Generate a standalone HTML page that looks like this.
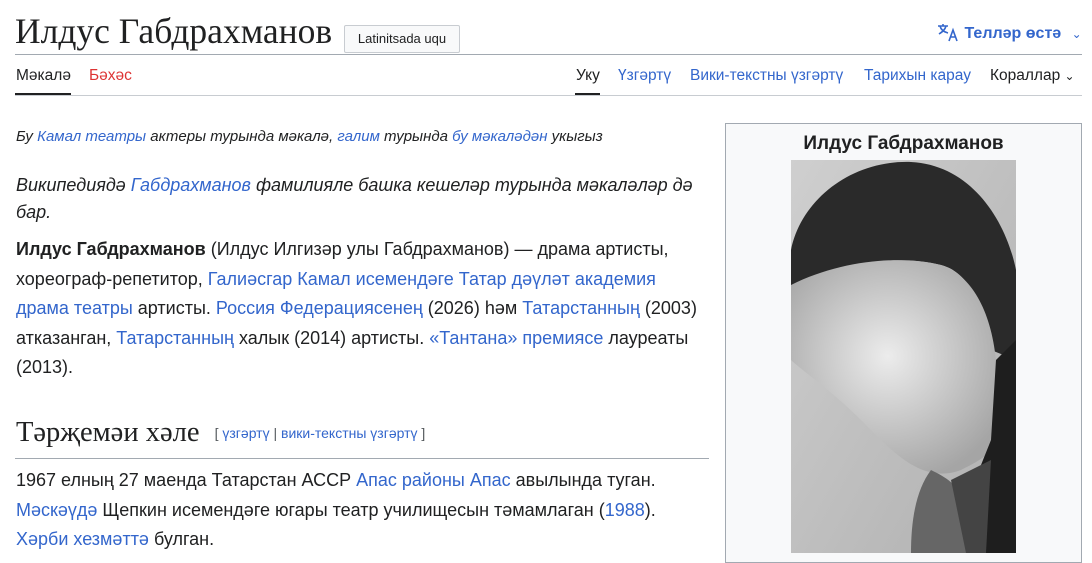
<!DOCTYPE html>
<html><head><meta charset="utf-8"><style>
*{margin:0;padding:0;box-sizing:border-box}
body{width:1092px;height:553px;overflow:hidden;background:#fff;font-family:"Liberation Sans",sans-serif;color:#202122;position:relative}
a{color:#3366cc;text-decoration:none}
.abs{position:absolute;white-space:nowrap}
h1{position:absolute;left:15px;top:10px;font-family:"Liberation Serif",serif;font-weight:normal;font-size:35.5px;line-height:42px;color:#202122}
.btn{position:absolute;left:344px;top:25px;width:116px;height:28px;border:1px solid #c8ccd1;background:#f8f9fa;font-size:13px;line-height:26px;text-align:center;border-radius:2px}
.rule{position:absolute;height:1px;background:#a2a9b1}
.tab{position:absolute;top:66px;font-size:15.5px;line-height:20px}
.p{position:absolute;left:16px;width:690px;font-size:18px;line-height:29.5px}
</style></head><body>
<h1>Илдус Габдрахманов</h1>
<div class="btn">Latinitsada uqu</div>
<div class="abs" style="left:936px;top:22px;font-size:16px;font-weight:bold;color:#3366cc">
<svg width="24" height="20" viewBox="0 0 22 20" style="vertical-align:-4px"><g fill="none" stroke="#3366cc" stroke-width="1.6"><path d="M1 4h10M6 2v2M3 4c1 4 4 6 8 7M9 4c-1 4-4 6-7 8"/><path d="M12 19l4-11 4 11M13.5 15h5"/></g></svg>
 Телләр өстә <span style="font-weight:normal;font-size:12px;margin-left:6px">⌄</span></div>
<div class="rule" style="left:15px;top:54px;width:1067px"></div>
<div class="tab" style="left:16px">Мәкалә</div>
<div style="position:absolute;left:15px;top:93px;width:56px;height:2px;background:#202122"></div>
<div class="tab" style="left:89px;color:#d33">Бәхәс</div>
<div class="tab" style="left:576px">Уку</div>
<div style="position:absolute;left:575px;top:93px;width:25px;height:2px;background:#202122"></div>
<div class="tab" style="left:618px;color:#3366cc">Үзгәртү</div>
<div class="tab" style="left:690px;color:#3366cc">Вики-текстны үзгәртү</div>
<div class="tab" style="left:864px;color:#3366cc">Тарихын карау</div>
<div class="tab" style="left:990px">Кораллар <span style="font-size:12px">⌄</span></div>
<div class="rule" style="left:15px;top:95px;width:1067px;background:#c8ccd1"></div>

<div class="abs" style="left:16px;top:128px;font-size:15px;font-style:italic">Бу <a href="#">Камал театры</a> актеры турында мәкалә, <a href="#">галим</a> турында <a href="#">бу мәкаләдән</a> укыгыз</div>
<div class="p" style="top:172px;font-style:italic;line-height:27px">Википедиядә <a href="#">Габдрахманов</a> фамилияле башка кешеләр турында мәкаләләр дә бар.</div>
<div class="p" style="top:235px"><b>Илдус Габдрахманов</b> (Илдус Илгизәр улы Габдрахманов) — драма артисты, хореограф-репетитор, <a href="#">Галиәсгар Камал исемендәге Татар дәүләт академия драма театры</a> артисты. <a href="#">Россия Федерациясенең</a> (2026) һәм <a href="#">Татарстанның</a> (2003) атказанган, <a href="#">Татарстанның</a> халык (2014) артисты. <a href="#">«Тантана» премиясе</a> лауреаты (2013).</div>
<div class="abs" style="left:16px;top:417px;font-family:'Liberation Serif',serif;font-size:28.5px">Тәрҗемәи хәле <span style="font-family:'Liberation Sans',sans-serif;font-size:14px;margin-left:8px;color:#54595d;vertical-align:3px">[ <a href="#">үзгәртү</a> | <a href="#">вики-текстны үзгәртү</a> ]</span></div>
<div class="rule" style="left:15px;top:458px;width:694px"></div>
<div class="p" style="top:466px">1967 елның 27 маенда Татарстан АССР <a href="#">Апас районы</a> <a href="#">Апас</a> авылында туган. <a href="#">Мәскәүдә</a> Щепкин исемендәге югары театр училищесын тәмамлаган (<a href="#">1988</a>). <a href="#">Хәрби хезмәттә</a> булган.</div>

<div style="position:absolute;left:725px;top:123px;width:357px;height:440px;background:#f8f9fa;border:1px solid #a2a9b1"></div>
<div class="abs" style="left:725px;top:133px;width:357px;text-align:center;font-size:19px;font-weight:bold">Илдус Габдрахманов</div>
<svg style="position:absolute;left:791px;top:160px" width="225" height="393" viewBox="0 0 225 393">
<defs><linearGradient id="bg" x1="0" y1="0" x2="1" y2="1"><stop offset="0" stop-color="#cfcfcf"/><stop offset="1" stop-color="#b0b0b0"/></linearGradient>
<radialGradient id="face" cx="0.45" cy="0.45" r="0.6"><stop offset="0" stop-color="#ececec"/><stop offset="1" stop-color="#a5a5a5"/></radialGradient></defs>
<rect width="225" height="393" fill="url(#bg)"/>
<path d="M0 90 C10 40 60 0 120 2 C180 5 215 60 225 110 L225 200 L200 190 C190 130 170 110 150 105 C110 95 60 100 0 130Z" fill="#2a2a2a"/>
<path d="M0 125 C50 100 110 95 150 105 C180 115 200 150 205 200 L215 260 C210 290 190 300 170 310 C130 325 100 290 70 260 C40 230 10 210 0 200Z" fill="url(#face)"/>
<path d="M205 200 L225 180 L225 393 L190 393 L180 330 L200 280Z" fill="#1e1e1e"/>
<path d="M140 310 C160 320 180 330 190 393 L120 393 C120 360 125 330 140 310Z" fill="#666"/>
<path d="M160 320 L200 300 L195 393 L175 393Z" fill="#444"/>
</svg>
</body></html>
